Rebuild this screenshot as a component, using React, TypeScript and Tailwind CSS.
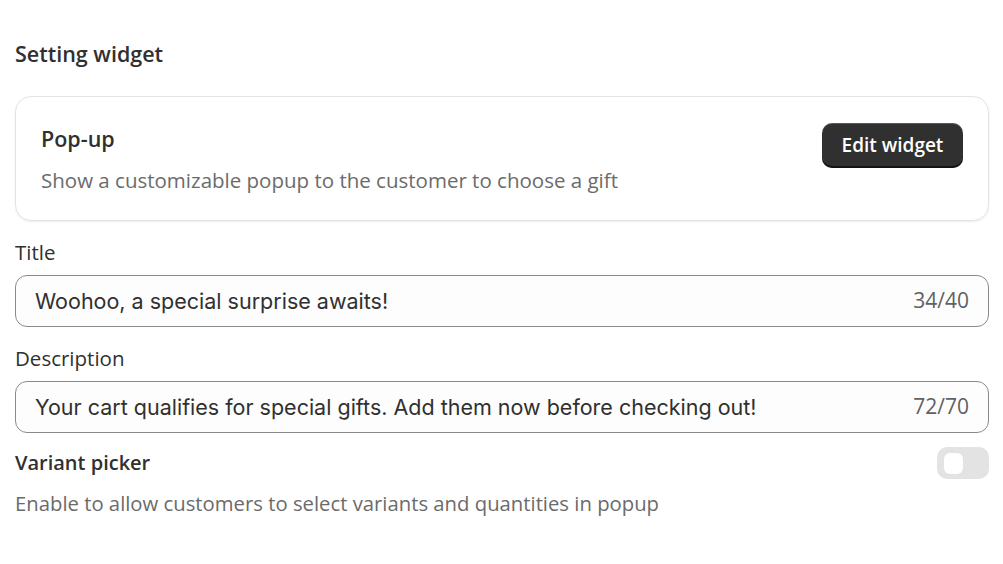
import React from "react";

export default function App() {
  const ui = { fontFamily: '"Open Sans", "Noto Sans", sans-serif' };
  const inter = { fontFamily: 'Inter, "Liberation Sans", sans-serif' };
  return (
    <div className="w-[1003px] h-[564px] bg-white overflow-hidden" style={ui}>
      <div className="px-[15px] pt-[40px] text-[#303030]">
        <div className="text-[21.5px] leading-[28px] font-semibold text-[#303030]">Setting widget</div>
        <div className="mt-[28px] h-[125px] w-[974px] rounded-[16px] border border-[#e3e3e3] shadow-[0_1px_2px_rgba(0,0,0,0.08)] flex items-start justify-between pl-[25px] pr-[25px] pt-[28px]">
          <div>
            <div className="text-[21.5px] leading-[28px] font-semibold text-[#303030]">Pop-up</div>
            <div className="mt-[13px] text-[20.5px] leading-[28px] text-[#6b6b6b]">Show a customizable popup to the customer to choose a gift</div>
          </div>
          <button className="mt-[-2px] h-[45px] w-[141px] rounded-[10px] bg-[#303030] text-white text-[19px] font-semibold shadow-[inset_0_-2px_0_rgba(0,0,0,0.6),inset_0_1px_0_rgba(255,255,255,0.2)]">
            Edit widget
          </button>
        </div>
        <div className="mt-[17px] text-[20.5px] leading-[28px] text-[#303030]">Title</div>
        <div className="mt-[9px] h-[52px] w-[974px] rounded-[12px] border border-[#8a8a8a] bg-[#fdfdfd] flex items-center justify-between pl-[19px] pr-[19px]">
          <span className="text-[21.5px] text-[#303030]" style={inter}>Woohoo, a special surprise awaits!</span>
          <span className="text-[21px] text-[#616161]">34/40</span>
        </div>
        <div className="mt-[17px] text-[20.5px] leading-[28px] text-[#303030]">Description</div>
        <div className="mt-[9px] h-[52px] w-[974px] rounded-[12px] border border-[#8a8a8a] bg-[#fdfdfd] flex items-center justify-between pl-[19px] pr-[19px]">
          <span className="text-[21.5px] text-[#303030]" style={inter}>Your cart qualifies for special gifts. Add them now before checking out!</span>
          <span className="text-[21px] text-[#616161]">72/70</span>
        </div>
        <div className="mt-[14px] w-[974px] flex items-center justify-between">
          <div className="text-[20px] leading-[28px] font-semibold text-[#303030]">Variant picker</div>
          <div className="w-[52px] h-[32px] rounded-[10px] bg-[#e3e3e3] flex items-center pl-[7px]">
            <div className="w-[19px] h-[21px] rounded-[6px] bg-white" />
          </div>
        </div>
        <div className="mt-[10px] text-[20.3px] leading-[28px] text-[#6b6b6b]">Enable to allow customers to select variants and quantities in popup</div>
      </div>
    </div>
  );
}
